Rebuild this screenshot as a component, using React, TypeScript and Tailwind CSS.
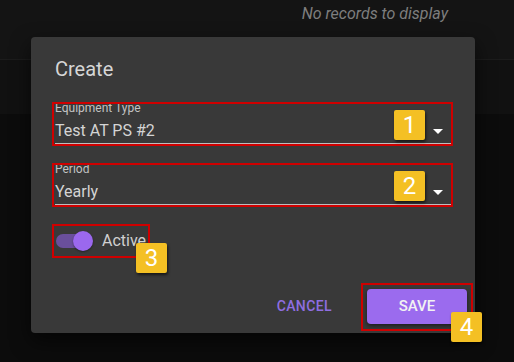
import React from 'react';

const FONT = { fontFamily: 'Roboto, "Liberation Sans", sans-serif' };

function Badge({ n, className }: { n: number; className: string }) {
  return (
    <div
      className={`absolute w-[31px] h-[30px] rounded-[2px] bg-[#f4c024] text-white text-[24px] leading-[30px] text-center shadow-[1px_2px_3px_rgba(0,0,0,0.6)] z-10 ${className}`}
    >
      {n}
    </div>
  );
}

function SelectField({ label, value, badge }: { label: string; value: string; badge: number }) {
  return (
    <div className="relative">
      {/* annotation frame */}
      <div className="absolute -left-[3px] -right-[2px] top-0 -bottom-[2px] border-2 border-[#cf0000]" />
      <div className="border-b border-[#bdbdbd]">
        <p className="text-[12px] leading-3 text-[#c2c2c2]">{label}</p>
        <div className="mt-[5px] h-6 flex items-center justify-between">
          <span className="text-[16px] text-[#d4d4d4]">{value}</span>
          <svg className="w-[10px] h-[5px] mr-[8px]" viewBox="0 0 10 5">
            <path d="M0 0l5 5 5-5z" fill="#ffffff" />
          </svg>
        </div>
      </div>
      <Badge n={badge} className="left-[339px] top-[8px]" />
    </div>
  );
}

export default function App() {
  return (
    <div className="relative w-[514px] h-[362px] overflow-hidden bg-[#0c0c0c]" style={FONT}>
      {/* page behind the modal */}
      <div className="h-[59px] bg-[#141414] flex items-start justify-end pr-[66px] pt-[2px]">
        <span className="text-[16px] italic text-[#7e7e7e]">No records to display</span>
      </div>
      <div className="h-[55px] bg-[#111111] border-t border-[#1c1c1c]" />

      {/* dialog */}
      <div className="absolute left-[31px] top-[37px] w-[444px] h-[296px] rounded bg-[#393939] shadow-[0_8px_20px_rgba(0,0,0,0.6)]">
        <h2 className="px-6 pt-4 text-[20px] leading-8 text-[#d6d6d6]">Create</h2>

        <div className="px-6 mt-[17px] flex flex-col gap-[19px]">
          <SelectField label="Equipment Type" value="Test AT PS #2" badge={1} />
          <SelectField label="Period" value="Yearly" badge={2} />

          <div className="relative h-[34px] w-[95px] flex items-center">
            <div className="absolute -left-[3px] right-0 top-0 bottom-0 border-2 border-[#cf0000]" />
            <div className="relative ml-px w-[36px] h-[14px] rounded-full bg-[#6a4f9c]">
              <div className="absolute right-[-1px] top-[-3px] w-5 h-5 rounded-full bg-[#9b68ee] shadow-[0_1px_2px_rgba(0,0,0,0.4)]" />
            </div>
            <span className="ml-[10px] text-[16px] text-[#d0d0d0]">Active</span>
            <Badge n={3} className="left-[81px] top-[19px]" />
          </div>
        </div>

        <div className="flex justify-end items-center mt-[31px] pr-2 gap-[27px]">
          <button className="px-2 text-[14px] font-medium tracking-[0.4px] text-[#8f6ee2]">CANCEL</button>
          <div className="relative">
            <div className="absolute -left-[6px] -right-[6px] -top-[6px] -bottom-[7px] border-2 border-[#cf0000]" />
            <button className="w-[100px] h-[35px] rounded bg-[#9b6bee] text-[15px] font-medium text-[#f2f2f2] shadow-[0_2px_4px_rgba(0,0,0,0.5)]">
              SAVE
            </button>
            <Badge n={4} className="left-[84px] top-[23px]" />
          </div>
        </div>
      </div>
    </div>
  );
}
